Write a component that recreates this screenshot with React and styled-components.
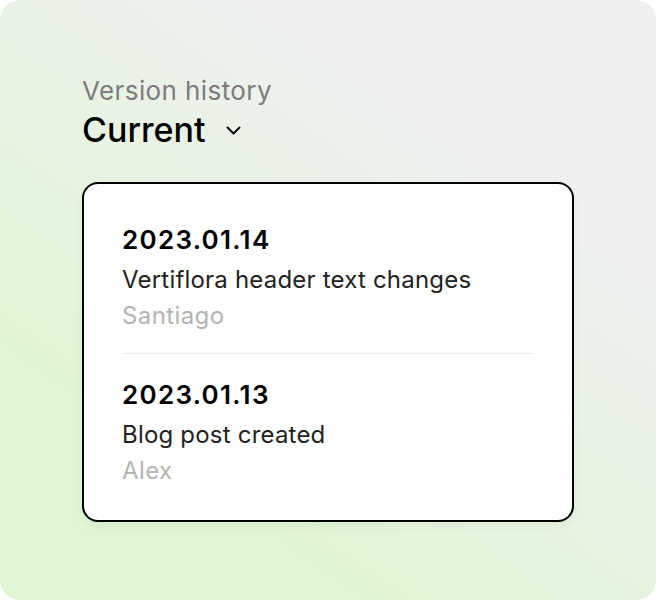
import React from "react";
import styled, { createGlobalStyle } from "styled-components";

const GlobalStyle = createGlobalStyle`
  body {
    margin: 0;
    background: #ffffff;
    font-family: Inter, "Noto Sans", Arial, sans-serif;
  }
`;

const Panel = styled.div`
  width: 656px;
  height: 600px;
  box-sizing: border-box;
  border-radius: 20px;
  padding: 75px 82px 0;
  background: linear-gradient(215deg, #eef1ef 28%, #e0f5d4 76%);
`;

const Header = styled.div`
  display: flex;
  flex-direction: column;
  margin-bottom: 34px;
`;

const Overline = styled.span`
  font-size: 26px;
  line-height: 32px;
  font-weight: 400;
  color: #7c7c7c;
  letter-spacing: 0.4px;
`;

const Selector = styled.div`
  display: flex;
  align-items: center;
  gap: 21px;
  margin-top: 5px;
`;

const SelectorLabel = styled.span`
  font-size: 34px;
  line-height: 36px;
  font-weight: 500;
  color: #000;
`;

const Card = styled.div`
  width: 492px;
  box-sizing: border-box;
  border: 2px solid #000;
  border-radius: 16px;
  background: #fff;
  padding: 41px 38px 33px;
  box-shadow: 0 4px 10px rgba(0, 0, 0, 0.04);
`;

const Entry = styled.div`
  display: flex;
  flex-direction: column;
`;

const EntryDate = styled.span`
  font-size: 26px;
  line-height: 30px;
  font-weight: 600;
  color: #000;
  letter-spacing: 1.3px;
`;

const EntryTitle = styled.span`
  margin-top: 9px;
  font-size: 24px;
  line-height: 32px;
  color: #222;
  letter-spacing: 0.2px;
`;

const EntryAuthor = styled.span`
  margin-top: 4px;
  font-size: 24px;
  line-height: 32px;
  color: #b3b5b3;
  letter-spacing: 0.4px;
`;

const Divider = styled.hr`
  border: none;
  height: 1px;
  background: #ececec;
  margin: 21px 0 26px;
`;

const Chevron = () => (
  <svg width="15" height="9" viewBox="0 0 15 9" fill="none">
    <path d="M1.5 1.5 L7.5 7.5 L13.5 1.5" stroke="#000" strokeWidth="2" strokeLinecap="round" strokeLinejoin="round" />
  </svg>
);

const versions = [
  { date: "2023.01.14", title: "Vertiflora header text changes", author: "Santiago" },
  { date: "2023.01.13", title: "Blog post created", author: "Alex" }
];

const App = () => (
  <>
    <GlobalStyle />
    <Panel>
      <Header>
        <Overline>Version history</Overline>
        <Selector>
          <SelectorLabel>Current</SelectorLabel>
          <Chevron />
        </Selector>
      </Header>
      <Card>
        {versions.map((v, i) => (
          <React.Fragment key={v.date}>
            {i > 0 && <Divider />}
            <Entry>
              <EntryDate>{v.date}</EntryDate>
              <EntryTitle>{v.title}</EntryTitle>
              <EntryAuthor>{v.author}</EntryAuthor>
            </Entry>
          </React.Fragment>
        ))}
      </Card>
    </Panel>
  </>
);

export default App;
